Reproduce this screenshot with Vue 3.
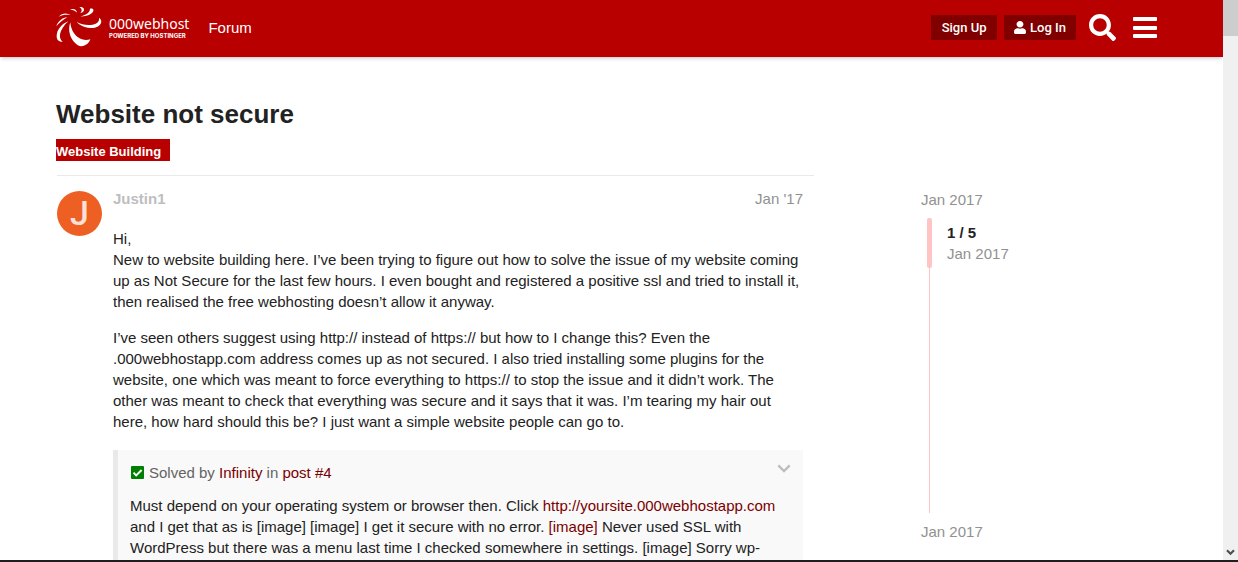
<script setup>
const paragraphs = [
  'I’ve seen others suggest using http:// instead of https:// but how to I change this? Even the .000webhostapp.com address comes up as not secured. I also tried installing some plugins for the website, one which was meant to force everything to https:// to stop the issue and it didn’t work. The other was meant to check that everything was secure and it says that it was. I’m tearing my hair out here, how hard should this be? I just want a simple website people can go to.'
]
</script>

<template>
  <div class="window">
    <div class="viewport">
      <div class="page">
        <header class="header">
          <div class="wrap header-row">
            <a class="logo" href="#" aria-label="000webhost home">
              <svg class="mark" viewBox="18 18 144 126" width="48" height="42" aria-hidden="true">
                <g fill="#fff">
                  <path d="M80 66C94 74 112 77 128 74C142 71 149 64 147 53C156 58 156 70 147 77C136 86 118 86 102 80C93 77 86 73 80 66Z" />
                  <path d="M61 67C62 84 70 102 84 112C96 120 108 122 121 118C118 129 107 138 94 139C80 137 66 122 60 104C56 90 57 78 61 67Z" />
                  <path d="M55 64C42 76 32 90 30 103C29 113 31 120 38 126C27 126 20 120 20 109C20 90 34 72 55 64Z" />
                  <path d="M52 52C38 53 24 63 19 79C28 68 38 60 52 52Z" />
                  <path d="M62 45C50 38 36 39 26 50C38 44 48 43 62 45Z" />
                  <path d="M81 38C80 28 70 24 60 29C70 29 76 32 81 38Z" />
                  <path d="M88 21C98 20 105 25 101 33C99 37 96 38 91 39C97 33 97 27 88 21Z" />
                  <path d="M91 49C106 46 120 38 120 26C130 24 133 31 128 37C121 45 107 50 91 49Z" />
                </g>
              </svg>
              <span class="logo-text">
                <span class="logo-name">000webhost</span>
                <span class="logo-sub">POWERED BY HOSTINGER</span>
              </span>
            </a>
            <nav class="nav"><a href="#">Forum</a></nav>
            <div class="actions">
              <button class="btn" type="button">Sign Up</button>
              <button class="btn" type="button">
                <svg viewBox="0 0 448 512" width="12" height="13" preserveAspectRatio="none" aria-hidden="true"><path fill="#fff" d="M224 256c71 0 128-57 128-128S295 0 224 0 96 57 96 128s57 128 128 128zm90 32h-17c-22 10-47 16-73 16s-51-6-73-16h-17C60 288 0 348 0 422v42c0 27 21 48 48 48h352c27 0 48-21 48-48v-42c0-74-60-134-134-134z" /></svg>
                Log In
              </button>
              <button class="icon-btn" type="button" aria-label="Search">
                <svg viewBox="0 0 512 512" width="27" height="27" aria-hidden="true"><path fill="#fff" d="M505 443 405 343c-4-4-11-7-17-7h-16c28-35 44-80 44-128C416 93 323 0 208 0S0 93 0 208s93 208 208 208c48 0 93-16 128-44v16c0 6 3 13 7 17l100 100c9 9 25 9 34 0l28-28c9-10 9-25 0-34zM208 336c-71 0-128-57-128-128S137 80 208 80s128 57 128 128-57 128-128 128z" /></svg>
              </button>
              <button class="icon-btn menu" type="button" aria-label="Menu">
                <svg viewBox="0 0 24 22" width="24" height="22" aria-hidden="true"><g fill="#fff"><rect y="0" width="24" height="4" rx="1" /><rect y="9" width="24" height="4" rx="1" /><rect y="17" width="24" height="4" rx="1" /></g></svg>
              </button>
            </div>
          </div>
        </header>

        <main class="wrap main">
          <h1>Website not secure</h1>
          <a class="category" href="#">Website Building</a>
          <div class="columns">
            <article class="post">
              <div class="avatar" aria-hidden="true">J</div>
              <div class="body">
                <div class="meta">
                  <a class="author" href="#">Justin1</a>
                  <a class="date" href="#">Jan '17</a>
                </div>
                <p>Hi,<br>New to website building here. I’ve been trying to figure out how to solve the issue of my website coming up as Not Secure for the last few hours. I even bought and registered a positive ssl and tried to install it, then realised the free webhosting doesn’t allow it anyway.</p>
                <p v-for="text in paragraphs" :key="text">{{ text }}</p>
                <aside class="quote">
                  <div class="quote-title">
                    <svg viewBox="0 0 13 13" width="13" height="13" aria-hidden="true"><rect width="13" height="13" rx="1" fill="#008000" /><path d="M2.500 6.700 5.200 9.400 10.600 4" fill="none" stroke="#fff" stroke-width="1.900" /></svg>
                    <span>Solved by <a href="#">Infinity</a> in <a href="#">post #4</a></span>
                    <button class="expand" type="button" aria-label="Expand quote">
                      <svg viewBox="0 0 14 9" width="14" height="9" aria-hidden="true"><path d="M1.300 1.300 7 7l5.700-5.700" fill="none" stroke="#bebebe" stroke-width="2.400" /></svg>
                    </button>
                  </div>
                  <blockquote>Must depend on your operating system or browser then. Click <a href="#">http://yoursite.000webhostapp.com</a> and I get that as is [image] [image] I get it secure with no error. <a href="#">[image]</a> Never used SSL with WordPress but there was a menu last time I checked somewhere in settings. [image] Sorry wp-</blockquote>
                </aside>
              </div>
            </article>
            <nav class="timeline" aria-label="Topic timeline">
              <a href="#">Jan 2017</a>
              <div class="track">
                <div class="handle"></div>
                <div class="position">
                  <strong>1 / 5</strong>
                  <span>Jan 2017</span>
                </div>
              </div>
              <a href="#">Jan 2017</a>
            </nav>
          </div>
        </main>
      </div>
      <div class="scrollbar" aria-hidden="true">
        <div class="thumb"></div>
        <svg viewBox="0 0 9 7" width="9" height="7"><path d="M1 1.200 4.500 4.700 8 1.200" fill="none" stroke="#505050" stroke-width="2.200" /></svg>
      </div>
    </div>
    <div class="edge"></div>
  </div>
</template>

<style>
body {
  margin: 0;
  overflow: hidden;
}
</style>

<style scoped>
.window {
  display: flex;
  flex-direction: column;
  height: 100vh;
  background: #fff;
  color: #222;
  font: 15px/21px "Liberation Sans", Arial, sans-serif;
}
.viewport {
  display: flex;
  flex: 1;
  min-height: 0;
}
.page {
  flex: 1;
  min-width: 0;
  overflow: hidden;
}
.edge {
  flex: none;
  height: 2px;
  background: #1f1d20;
}
.scrollbar {
  display: flex;
  flex-direction: column;
  justify-content: space-between;
  align-items: center;
  width: 15px;
  padding-bottom: 4px;
  background: #f0f0f0;
}
.thumb {
  width: 100%;
  height: 36px;
  background: #cdcdcd;
}
a {
  color: #7a0000;
  text-decoration: none;
}
button {
  border: 0;
  font-family: inherit;
  cursor: pointer;
}
svg {
  display: block;
  flex: none;
}
.wrap {
  box-sizing: border-box;
  max-width: 1111px;
  margin: 0 auto;
}
.header {
  background: #b80000;
  box-shadow: 0 2px 4px -1px rgba(0, 0, 0, 0.25);
}
.header-row {
  display: flex;
  align-items: center;
  height: 57px;
  padding-right: 10px;
  padding-bottom: 2px;
}
.logo {
  display: flex;
  gap: 5px;
  color: #fff;
  font-family: "Noto Sans", sans-serif;
}
.mark {
  margin-bottom: 2px;
}
.logo-text {
  display: flex;
  flex-direction: column;
  padding-top: 9px;
  white-space: nowrap;
}
.logo-name {
  font-size: 14px;
  line-height: 17px;
}
.logo-sub {
  font-family: Inter, sans-serif;
  font-size: 6px;
  font-weight: 700;
  line-height: 7px;
}
.nav {
  margin-left: 19px;
}
.nav a {
  color: #fff;
}
.actions {
  display: flex;
  align-items: center;
  margin-left: auto;
}
.btn {
  display: flex;
  align-items: center;
  justify-content: center;
  gap: 4px;
  min-width: 66px;
  height: 25px;
  margin-right: 7px;
  padding: 0 10px;
  background: #800000;
  color: #fff;
  font: 500 13px/25px Roboto, sans-serif;
}
.icon-btn {
  padding: 0;
  background: none;
  margin-left: 6px;
}
.menu {
  margin-left: 17px;
}
.main {
  padding-top: 42px;
}
h1 {
  margin: 0;
  font-size: 26px;
  line-height: 30px;
}
.category {
  display: inline-block;
  margin-top: 10px;
  padding-top: 4px;
  padding-right: 9px;
  background: #b80000;
  color: #fff;
  font-size: 13px;
  font-weight: 700;
  line-height: 18px;
}
.columns {
  display: flex;
  align-items: flex-start;
  justify-content: space-between;
  margin-top: 14px;
}
.post {
  display: flex;
  gap: 11px;
  box-sizing: border-box;
  flex: 0 1 757px;
  margin-left: 1px;
  padding: 12px 11px 0 0;
  border-top: 1px solid #e9e9e9;
}
.avatar {
  flex: none;
  width: 45px;
  height: 45px;
  margin-top: 3px;
  border-radius: 50%;
  background: #ed5f22;
  color: #fbe0d5;
  font: 500 34px/45px Roboto, sans-serif;
  text-align: center;
}
.body {
  flex: 1;
  min-width: 0;
}
.meta {
  display: flex;
  justify-content: space-between;
  margin-bottom: 19px;
}
.author {
  color: #bebebe;
  font-weight: 700;
}
.date,
.timeline a,
.position span {
  color: #919191;
}
p {
  margin: 0 0 15px;
}
.quote {
  margin-top: 18px;
  padding: 12px;
  border-left: 5px solid #e9e9e9;
  background: #f9f9f9;
}
.quote-title {
  display: flex;
  align-items: center;
  gap: 5px;
  margin-bottom: 12px;
  padding-left: 1px;
  color: #646464;
}
.expand {
  margin-left: auto;
  padding: 0 0 8px;
  background: none;
}
blockquote {
  margin: 0;
}
.timeline {
  display: flex;
  flex: 0 0 246px;
  flex-direction: column;
  padding-top: 14px;
}
.track {
  display: flex;
  align-items: flex-start;
  height: 295px;
  margin: 8px 0 8px 8px;
  border-left: 1px solid #ffc4c4;
}
.handle {
  width: 5px;
  height: 50px;
  margin-left: -3px;
  border-radius: 2px;
  background: #ffc4c4;
}
.position {
  display: flex;
  flex-direction: column;
  padding: 4px 0 0 15px;
}
</style>
